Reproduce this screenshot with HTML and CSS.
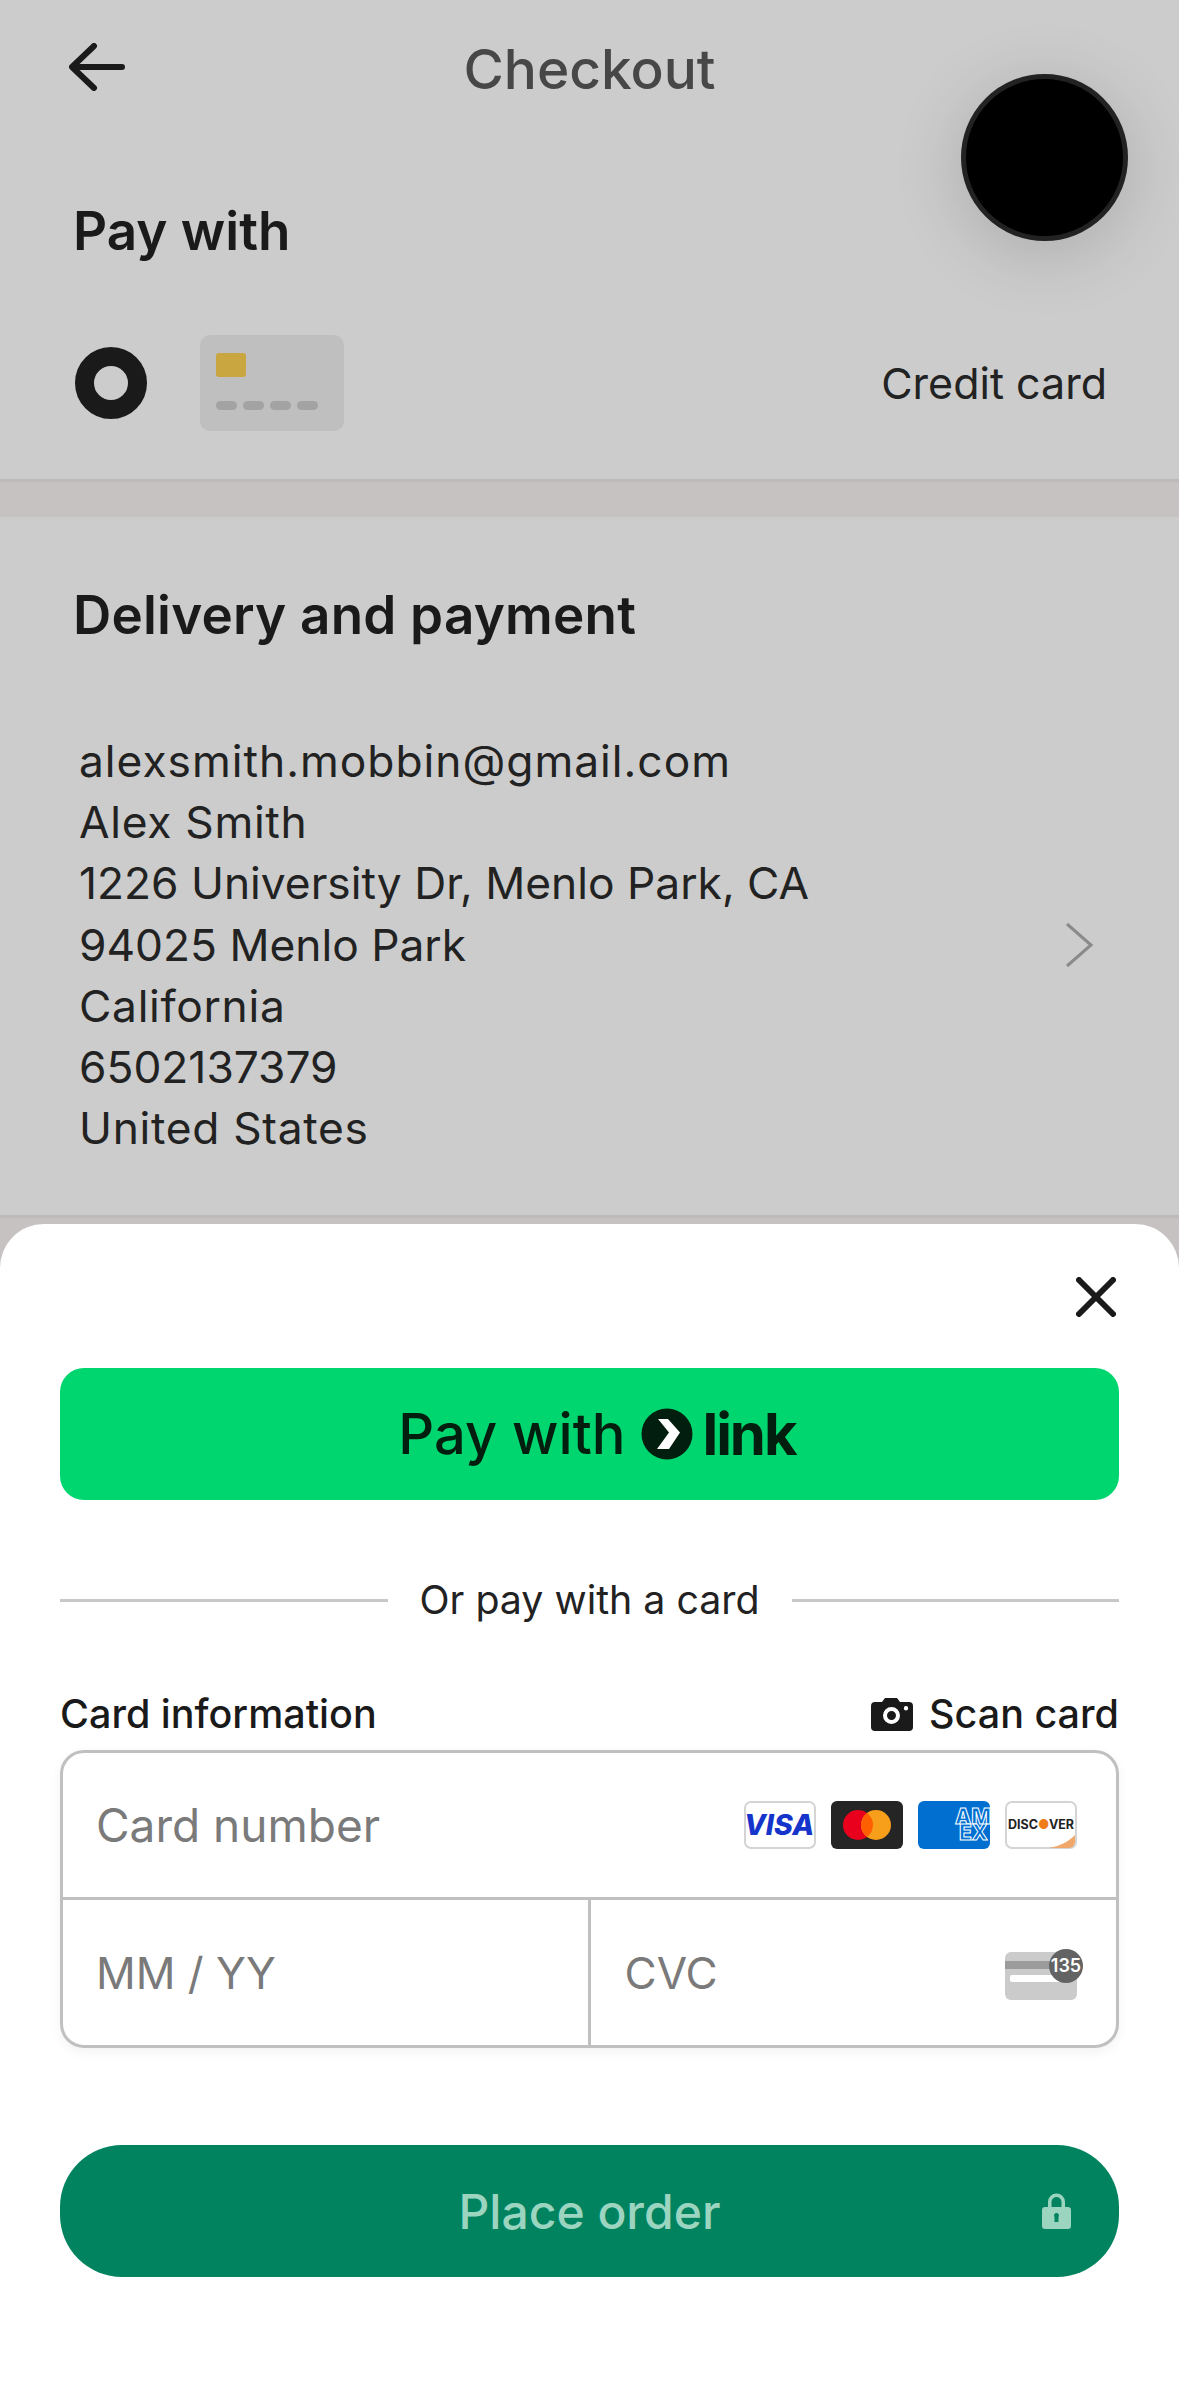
FILE: index.html
```html
<!DOCTYPE html>
<html lang="en">
    <head>
        <meta charset="UTF-8" />
        <meta name="viewport" content="width=device-width, initial-scale=1.0" />
        <title>Checkout</title>
        <link rel="stylesheet" href="styles.css">
    </head>
    <body>
        <div class="page">
            <header class="topbar">
                <svg class="back-icon" viewBox="0 0 56 48">
                    <path d="M53 24H4M25 3L3 24l22 21" />
                </svg>
                <h1>Checkout</h1>
            </header>

            <section class="pay-section">
                <h2>Pay with</h2>
                <div class="pay-row">
                    <span class="radio"></span>
                    <div class="card-thumb">
                        <span class="chip"></span>
                        <div class="dots"><span></span><span></span><span></span><span></span></div>
                    </div>
                    <span class="pay-label">Credit card</span>
                </div>
            </section>

            <section class="delivery-section">
                <h2>Delivery and payment</h2>
                <div class="address-row">
                    <div class="address">
                        <div class="email">alexsmith.mobbin@gmail.com</div>
                        <div class="spaced">Alex Smith</div>
                        <div>1226 University Dr, Menlo Park, CA</div>
                        <div>94025 Menlo Park</div>
                        <div class="spaced">California</div>
                        <div>6502137379</div>
                        <div class="spaced">United States</div>
                    </div>
                    <svg class="chevron" viewBox="0 0 28 46">
                        <path d="M2 2l24 21L2 44" />
                    </svg>
                </div>
            </section>

            <div class="floating-dot"></div>

            <div class="sheet">
                <div class="sheet-close">
                    <svg class="close-icon" viewBox="0 0 40 40">
                        <path d="M3 3l34 34M37 3L3 37" />
                    </svg>
                </div>

                <button class="link-btn">
                    <span>Pay with</span>
                    <svg class="link-mark" viewBox="0 0 52 52">
                        <circle cx="26" cy="26" r="25.5" fill="#011e0f" />
                        <path d="M17 11h10l12 13.500L28 41H16l12-16.500z" fill="#fff" />
                    </svg>
                    <b>link</b>
                </button>

                <div class="or-row">
                    <span class="or-line"></span>
                    <span>Or pay with a card</span>
                    <span class="or-line"></span>
                </div>

                <div class="card-head">
                    <span class="card-title">Card information</span>
                    <span class="scan">
                        <svg class="camera" viewBox="0 0 42 33">
                            <path fill-rule="evenodd" d="M14 0h12l3 4h9a4 4 0 0 1 4 4v21a4 4 0 0 1-4 4H4a4 4 0 0 1-4-4V8a4 4 0 0 1 4-4h7zM20.500 9a8.500 8.500 0 1 0 0 17 8.500 8.500 0 0 0 0-17zM20.500 13a4.500 4.500 0 1 1 0 9 4.500 4.500 0 0 1 0-9zM35 8a2.200 2.200 0 1 0 0 4.400A2.200 2.200 0 0 0 35 8z" />
                        </svg>
                        Scan card
                    </span>
                </div>

                <div class="card-box">
                    <div class="card-number">
                        <span class="placeholder">Card number</span>
                        <div class="brands">
                            <svg class="brand" viewBox="0 0 72 48">
                                <rect x="1" y="1" width="70" height="46" rx="6" fill="#fff" stroke="#d4d4d4" stroke-width="2" />
                                <text x="35" y="34" text-anchor="middle" class="visa-text">VISA</text>
                            </svg>
                            <svg class="brand" viewBox="0 0 72 48">
                                <rect width="72" height="48" rx="6" fill="#252525" />
                                <circle cx="27" cy="24" r="15" fill="#e8001c" />
                                <circle cx="45" cy="24" r="15" fill="#f79e1b" />
                                <path d="M36 12a15 15 0 0 1 0 24 15 15 0 0 1 0-24z" fill="#ff5f00" />
                            </svg>
                            <svg class="brand" viewBox="0 0 72 48">
                                <rect width="72" height="48" rx="6" fill="#016fd0" />
                                <text x="37" y="23" class="amex-text">AM</text>
                                <text x="41" y="39" class="amex-text">EX</text>
                            </svg>
                            <svg class="brand" viewBox="0 0 72 48">
                                <rect x="1" y="1" width="70" height="46" rx="6" fill="#fff" stroke="#d4d4d4" stroke-width="2" />
                                <path d="M44 47c12-2 20-7 26-13v7a6 6 0 0 1-6 6z" fill="#f0a76c" />
                                <text x="36" y="28" text-anchor="middle" class="discover-text">DISC<tspan fill="#f07d1a">●</tspan>VER</text>
                            </svg>
                        </div>
                    </div>
                    <div class="card-bottom">
                        <div class="card-cell">
                            <span class="placeholder">MM / YY</span>
                        </div>
                        <div class="card-cell cvc">
                            <span class="placeholder">CVC</span>
                            <svg class="cvc-icon" viewBox="0 0 78 54">
                                <rect x="0" y="6" width="72" height="48" rx="6" fill="#cbcbcb" />
                                <rect x="0" y="15" width="72" height="8" fill="#9b9b9b" />
                                <rect x="5" y="29" width="62" height="7" rx="2" fill="#fff" />
                                <circle cx="61" cy="20" r="17" fill="#636363" />
                                <text x="61" y="26" text-anchor="middle" class="cvc-text">135</text>
                            </svg>
                        </div>
                    </div>
                </div>

                <button class="order-btn">
                    Place order
                    <svg class="lock" viewBox="0 0 29 36">
                        <path fill-rule="evenodd" d="M6 14V9a8.500 8.500 0 0 1 17 0v5h3a3 3 0 0 1 3 3v16a3 3 0 0 1-3 3H3a3 3 0 0 1-3-3V17a3 3 0 0 1 3-3zM9.500 14h10V9a5 5 0 0 0-10 0zM14.500 20a2.500 2.500 0 0 0-2 4v5h4v-5a2.500 2.500 0 0 0-2-4z" />
                    </svg>
                </button>
            </div>
        </div>
    </body>
</html>
```

FILE: styles.css
```css
* {
    margin: 0;
    padding: 0;
    box-sizing: border-box;
}

body {
    font-family: Inter, "Noto Sans", sans-serif;
    background: #c6c2c1;
    color: #1a1a1a;
}

.page {
    position: relative;
    width: 1179px;
    height: 2396px;
    overflow: hidden;
}

.topbar {
    display: flex;
    justify-content: center;
    align-items: center;
    position: relative;
    height: 138px;
    background: #cccccc;
}

.back-icon {
    position: absolute;
    left: 69px;
    top: 43px;
    width: 56px;
    height: 48px;
    fill: none;
    stroke: #1a1a1a;
    stroke-width: 6;
    stroke-linecap: round;
    stroke-linejoin: round;
}

.topbar h1 {
    font-size: 55px;
    font-weight: 500;
    color: #474747;
}

h2 {
    font-size: 53px;
    font-weight: 600;
    color: #1a1a1a;
}

.pay-section {
    height: 344px;
    padding: 61px 72px 0 73px;
    background: #cccccc;
    border-bottom: 3px solid #bcbaba;
}

.pay-row {
    display: flex;
    align-items: center;
    margin-top: 72px;
}

.radio {
    width: 72px;
    height: 72px;
    margin-left: 2px;
    border-radius: 50%;
    border: 19px solid #1a1a1a;
}

.card-thumb {
    width: 144px;
    height: 96px;
    margin-left: 53px;
    padding: 18px 16px;
    border-radius: 10px;
    background: #bfbfbf;
}

.chip {
    display: block;
    width: 30px;
    height: 24px;
    border-radius: 3px;
    background: #c9a640;
}

.dots {
    display: flex;
    gap: 6px;
    margin-top: 24px;
}

.dots span {
    width: 21px;
    height: 9px;
    border-radius: 5px;
    background: #a3a3a3;
}

.pay-label {
    margin-left: auto;
    font-size: 43px;
    color: #222;
}

.delivery-section {
    margin-top: 35px;
    height: 701px;
    padding: 66px 73px 0;
    background: #cccccc;
    border-bottom: 3px solid #bcbaba;
}

.delivery-section h2 {
    letter-spacing: 0.2px;
}

.address-row {
    display: flex;
    align-items: center;
    justify-content: space-between;
    margin-top: 84px;
    padding-left: 6px;
    padding-right: 13px;
}

.address {
    font-size: 44.300px;
    line-height: 61.200px;
    color: #222;
}

.address .email {
    letter-spacing: 1px;
}

.address .spaced {
    letter-spacing: 0.7px;
}

.chevron {
    width: 28px;
    height: 46px;
    fill: none;
    stroke: #8a8a8a;
    stroke-width: 3;
}

.floating-dot {
    position: absolute;
    left: 961px;
    top: 74px;
    width: 167px;
    height: 167px;
    border-radius: 50%;
    background: #000;
    border: 5px solid #222;
    box-shadow: 0 12px 70px rgba(0, 0, 0, 0.16);
}

.sheet {
    position: absolute;
    left: 0;
    right: 0;
    top: 1224px;
    bottom: 0;
    padding: 0 60px;
    background: #fff;
    border-radius: 44px 44px 0 0;
}

.sheet-close {
    display: flex;
    justify-content: flex-end;
    padding: 53px 3px 0 0;
}

.close-icon {
    width: 40px;
    height: 40px;
    fill: none;
    stroke: #1a1a1a;
    stroke-width: 6;
    stroke-linecap: round;
}

.link-btn {
    display: flex;
    align-items: center;
    justify-content: center;
    width: 100%;
    height: 132px;
    margin-top: 51px;
    padding-left: 15px;
    border: 0;
    border-radius: 24px;
    background: #00d66f;
    color: #011e0f;
    font-family: inherit;
    font-size: 56px;
    font-weight: 500;
}

.link-mark {
    width: 52px;
    height: 52px;
    margin: 0 9px 0 16px;
}

.link-btn b {
    font-size: 58px;
    font-weight: 700;
    letter-spacing: -2px;
}

.or-row {
    display: flex;
    align-items: center;
    gap: 32px;
    margin-top: 76px;
    font-size: 39.300px;
    line-height: 48px;
    color: #222;
}

.or-line {
    flex: 1;
    height: 3px;
    background: #c8c8c8;
}

.card-head {
    display: flex;
    align-items: center;
    justify-content: space-between;
    margin-top: 66px;
    font-size: 39.500px;
    line-height: 48px;
    font-weight: 550;
}

.scan {
    display: flex;
    align-items: center;
    gap: 16px;
}

.camera {
    width: 42px;
    height: 33px;
    fill: #1a1a1a;
}

.card-box {
    margin-top: 12px;
    height: 298px;
    border: 3px solid #c0c0c0;
    border-radius: 24px;
    box-shadow: 0 4px 12px rgba(0, 0, 0, 0.05);
}

.card-number {
    display: flex;
    align-items: center;
    justify-content: space-between;
    height: 147px;
    padding: 0 39px 0 33px;
    border-bottom: 3px solid #c0c0c0;
}

.placeholder {
    font-size: 44px;
    color: #7a7a7a;
}

.card-number .placeholder {
    font-size: 46px;
}

.brands {
    display: flex;
    gap: 15px;
}

.brand {
    width: 72px;
    height: 48px;
}

.visa-text {
    font-size: 28.500px;
    font-weight: 800;
    font-style: italic;
    fill: #1434cb;
}

.amex-text {
    font-size: 21px;
    font-weight: 800;
    fill: #016fd0;
    stroke: #fff;
    stroke-width: 1;
}

.discover-text {
    font-size: 12.500px;
    font-weight: 700;
    fill: #222;
}

.cvc-text {
    font-size: 18px;
    font-weight: 600;
    fill: #fff;
}

.card-bottom {
    display: flex;
    height: 145px;
}

.card-cell {
    display: flex;
    flex: 1;
    align-items: center;
    justify-content: space-between;
    padding: 0 33px;
}

.card-cell.cvc {
    border-left: 3px solid #c0c0c0;
    padding-left: 34px;
    padding-right: 33px;
}

.cvc-icon {
    width: 78px;
    height: 54px;
}

.order-btn {
    position: relative;
    display: block;
    width: 100%;
    height: 132px;
    margin-top: 97px;
    border: 0;
    border-radius: 62px;
    background: #028360;
    color: #9bd5c0;
    font-family: inherit;
    font-size: 48px;
    font-weight: 500;
}

.lock {
    position: absolute;
    right: 48px;
    top: 48px;
    width: 29px;
    height: 36px;
    fill: #9bd5c0;
}
```
